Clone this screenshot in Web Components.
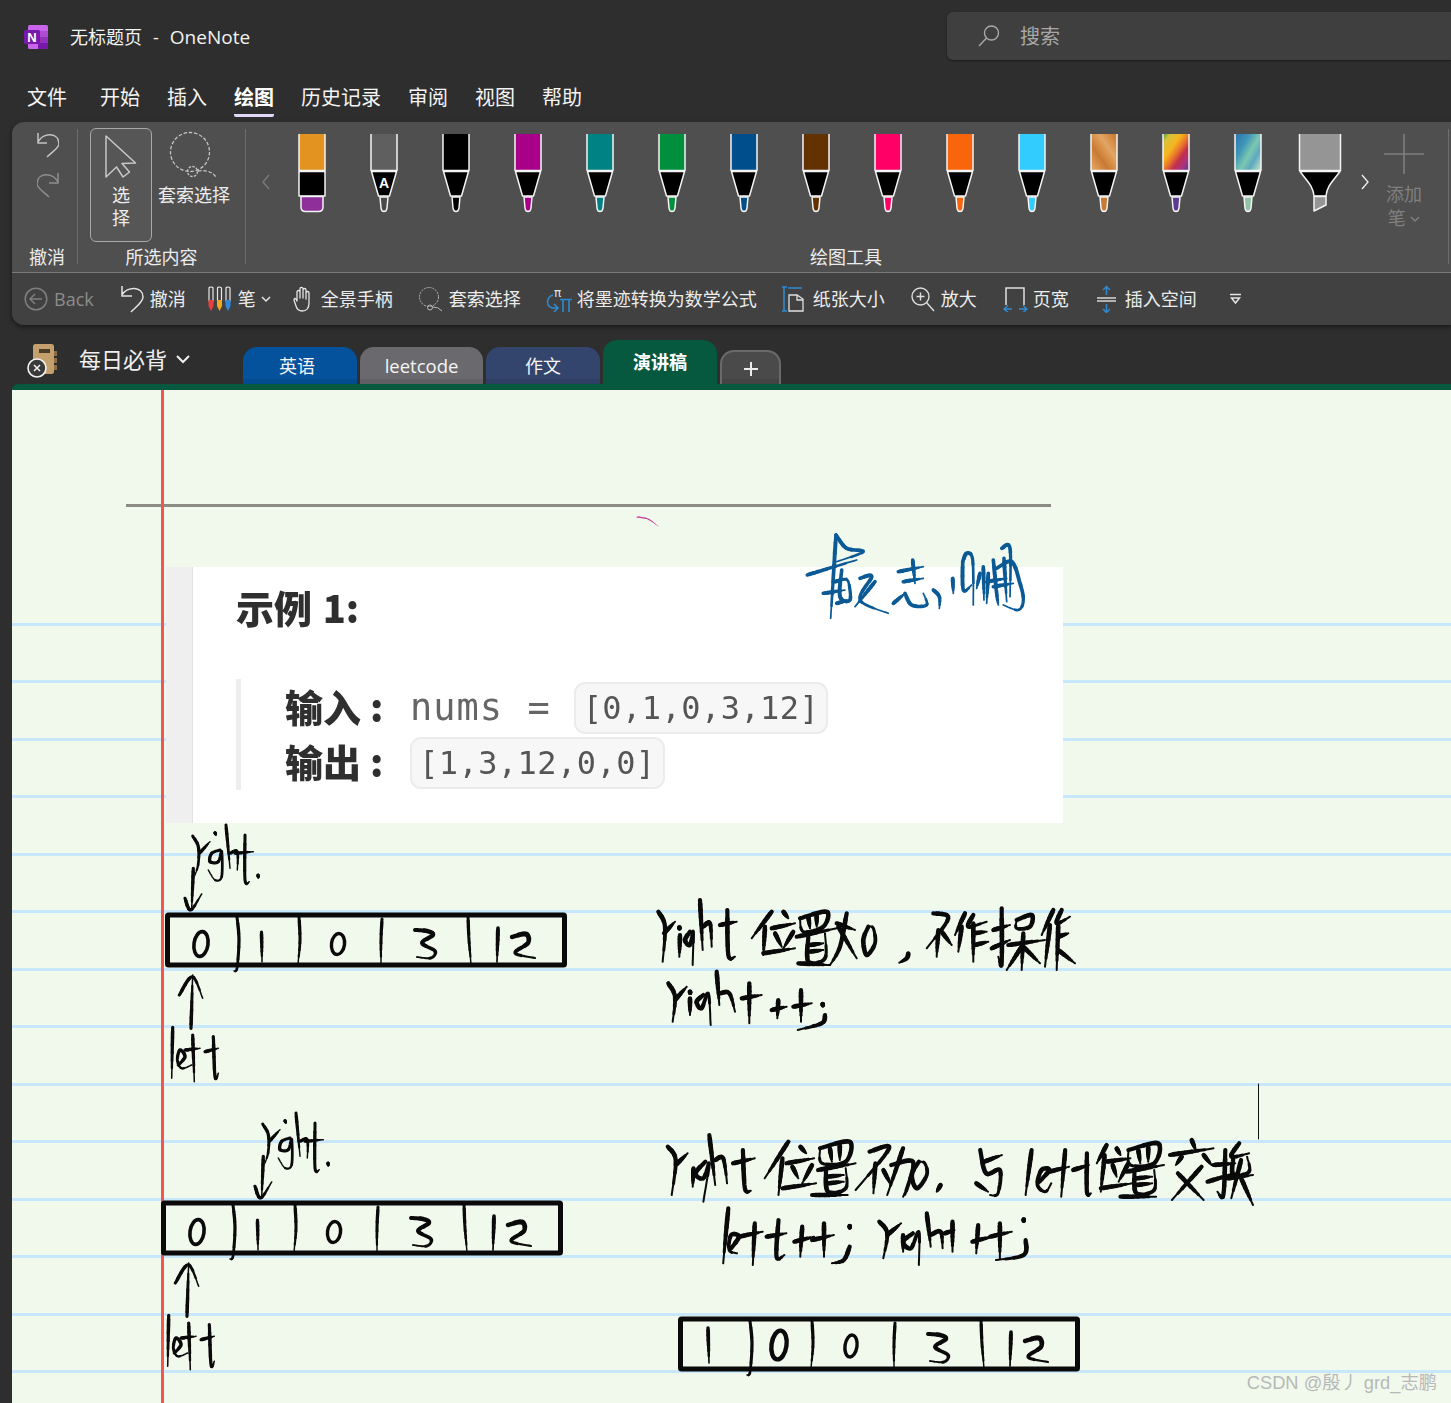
<!DOCTYPE html>
<html lang="zh">
<head>
<meta charset="utf-8">
<title>无标题页 - OneNote</title>
<style>
    html, body { margin: 0; height: 100%; overflow: hidden; background: #2e2e2e; }
    body { font-family: "Open Sans", "Noto Sans CJK SC", sans-serif; color: #f2f2f2; }
    onenote-app { width: 1451px; height: 1403px; }
</style>
</head>
<body>
<onenote-app></onenote-app>
<script>
const FONT = `"Open Sans", "Noto Sans CJK SC", sans-serif`;

class TitleBar extends HTMLElement {
    constructor() {
        super();
        this.attachShadow({ mode: 'open' });
        this.shadowRoot.innerHTML = `
            <style>
                :host { display: flex; height: 73px; justify-content: space-between; overflow: hidden; font: 18px/24px ${FONT}; color: #f2f2f2; }
                .left { display: flex; align-items: center; padding: 1px 0 0 24px; }
                svg.logo { width: 24px; height: 24px; margin-right: 22px; }
                .app { font-size: 19px; margin-left: 11px; }
                .dash { margin-left: 11px; }
                .search { flex: 0 0 504px; height: 48px; margin-top: 12px; display: flex; align-items: center; background: #3f3f3f; border-radius: 6px 0 0 6px; box-shadow: 0 1px 2px rgba(0,0,0,.45); font-size: 20px; color: #a8a8a8; }
                .search span { padding: 1px 0 0 1px; }
                .search svg { width: 24px; height: 24px; margin: 0 18px 0 30px; }
            </style>
            <div class="left">
                <svg class="logo" viewBox="0 0 24 24">
                    <rect x="4" width="20" height="24" rx="1.5" fill="#ca64ea"/>
                    <rect x="14" y="6" width="10" height="6" fill="#ae4bd5"/>
                    <rect x="14" y="12" width="10" height="6" fill="#9332bf"/>
                    <rect x="14" y="18" width="10" height="6" fill="#7719aa"/>
                    <rect y="5" width="16" height="14" rx="1.5" fill="#7719aa"/>
                    <text x="8" y="16.5" text-anchor="middle" font-family="Liberation Sans" font-weight="700" font-size="13" fill="#fff">N</text>
                </svg>
                <span>无标题页</span><span class="dash">-</span><span class="app">OneNote</span>
            </div>
            <div class="search">
                <svg viewBox="0 0 24 24" fill="none" stroke="#a8a8a8" stroke-width="1.4"><circle cx="14.5" cy="9" r="7"/><path d="M9.5 14 2 22"/></svg>
                <span>搜索</span>
            </div>`;
    }
}

class MenuBar extends HTMLElement {
    constructor() {
        super();
        this.attachShadow({ mode: 'open' });
        this.shadowRoot.innerHTML = `
            <style>
                :host { display: flex; height: 49px; padding-left: 27px; gap: 27px; font: 20px/28px ${FONT}; color: #f4f4f4; }
                ::slotted(a) { display: block; height: 28px; padding: 11px 0 2px; border-bottom: 3px solid transparent; }
                ::slotted(a:first-child) { margin-right: 6px; }
                ::slotted(a.on) { font-weight: 700; color: #fff; border-bottom-color: #e4d8f8; border-radius: 0 0 2px 2px; }
            </style>
            <slot></slot>`;
    }
}

class OneRibbon extends HTMLElement {
    constructor() {
        super();
        this.attachShadow({ mode: 'open' });
        this.shadowRoot.innerHTML = `
            <style>
                :host { display: block; margin-left: 12px; height: 203px; border-radius: 12px 0 0 12px; overflow: hidden; box-shadow: 0 2px 5px rgba(0,0,0,.5); font: 18px/24px ${FONT}; color: #ececec; }
                .top { display: flex; height: 151px; box-sizing: border-box; background: #4f4f4f; border-bottom: 1px solid #7a7a7a; }
                .bottom { display: flex; height: 52px; align-items: center; background: #414141; }
            </style>
            <div class="top"><slot name="top"></slot></div>
            <div class="bottom"><slot name="bottom"></slot></div>`;
    }
}

class RibbonGroup extends HTMLElement {
    constructor() {
        super();
        this.attachShadow({ mode: 'open' });
        this.shadowRoot.innerHTML = `
            <style>
                :host { display: flex; flex-direction: column; box-sizing: border-box; height: 135px; margin-top: 7px; border-right: 1px solid #6e6e6e; }
                .content { flex: 1; display: flex; min-height: 0; }
                .label { height: 24px; margin-bottom: -5px; padding: 0 var(--rp, 0) 0 var(--lp, 0); text-align: center; color: #ececec; }
            </style>
            <div class="content"><slot></slot></div>
            <div class="label"></div>`;
    }
    connectedCallback() {
        this.shadowRoot.querySelector('.label').textContent = this.getAttribute('label');
    }
}

class RibbonButton extends HTMLElement {
    constructor() {
        super();
        this.attachShadow({ mode: 'open' });
        this.shadowRoot.innerHTML = `
            <style>
                :host { display: flex; flex-direction: column; align-items: center; box-sizing: border-box; font: 18px/23px ${FONT}; color: #ececec; text-align: center; }
                :host([active]) { background: #565656; border: 1px solid #a8a8a8; border-radius: 6px; }
            </style>
            <slot></slot>`;
    }
}

const PEN_FILLS = {
    wood: `<linearGradient id="f" x1="0" y1=".3" x2=".3" y2="0" spreadMethod="reflect"><stop offset="0" stop-color="#c87a34"/><stop offset=".5" stop-color="#d88f48"/><stop offset="1" stop-color="#e2a566"/></linearGradient>`,
    rainbow: `<linearGradient id="f" x1="0" y1="0" x2="1" y2="1"><stop offset="0" stop-color="#3fa04a"/><stop offset=".14" stop-color="#d8c23a"/><stop offset=".36" stop-color="#f6b51e"/><stop offset=".52" stop-color="#e8742a"/><stop offset=".66" stop-color="#c42f4d"/><stop offset=".82" stop-color="#a8337f"/><stop offset="1" stop-color="#5a3a98"/></linearGradient>`,
    galaxy: `<linearGradient id="f" x1="0" y1=".1" x2="1" y2=".9"><stop offset="0" stop-color="#2f78b0"/><stop offset=".3" stop-color="#3f97b8"/><stop offset=".55" stop-color="#7cc7b0"/><stop offset=".75" stop-color="#5ea8c0"/><stop offset="1" stop-color="#b8e0c4"/></linearGradient>`
};

class PenTool extends HTMLElement {
    connectedCallback() {
        const kind = this.getAttribute('kind') || 'pen';
        const color = this.getAttribute('color') || '#000';
        const nib = this.getAttribute('nib') || color;
        const fill = PEN_FILLS[color] ? 'url(#f)' : color;
        const defs = PEN_FILLS[color] ? `<defs>${PEN_FILLS[color]}</defs>` : '';
        let body = `
            <path d="M23 0V36.5H49V0" fill="${fill}"/>
            <path d="M23.5 37.5 30.5 62H41.5L48.5 37.5Z" fill="#000"/>
            <path d="M32 63 33 74Q33.4 77.5 36 77.5 38.6 77.5 39 74L40 63Z" fill="${nib}"/>`;
        if (kind === 'eraser') {
            body = `
                <path d="M23 0V36.5H49V0" fill="${fill}"/>
                <rect x="23" y="37.5" width="26" height="24.5" fill="#000"/>
                <path d="M25 62.5V73Q25 77.5 29.5 77.5H42.5Q47 77.5 47 73V62.5Z" fill="${nib}"/>`;
        }
        if (kind === 'marker') {
            body = `
                <path d="M15.5 0V36.5H56.5V0" fill="${fill}"/>
                <path d="M16 37.5C24 48 29 52 30 62H42C43 52 48 48 56 37.5Z" fill="#000"/>
                <path d="M30 62.5V77L42 71V62.5Z" fill="${fill}"/>`;
        }
        const letter = this.hasAttribute('letter')
            ? `<text x="36" y="54" text-anchor="middle" font-family="Liberation Sans" font-weight="700" font-size="14" fill="#fff" stroke="none">${this.getAttribute('letter')}</text>`
            : '';
        this.attachShadow({ mode: 'open' });
        this.shadowRoot.innerHTML = `
            <style>
                :host { display: block; flex: 0 0 72px; height: 80px; margin-top: 5px; }
                svg { display: block; }
            </style>
            <svg width="72" height="80" viewBox="0 0 72 80" stroke="#f4f4f4" stroke-width="1.5" stroke-linejoin="round">${defs}${body}${letter}</svg>`;
    }
}

class ToolItem extends HTMLElement {
    constructor() {
        super();
        this.attachShadow({ mode: 'open' });
        this.shadowRoot.innerHTML = `
            <style>
                :host { display: flex; align-items: center; flex: none; gap: var(--gap, 7px); height: 30px; font: 18px/24px ${FONT}; color: #ececec; }
                :host([dim]) { color: #8c8c8c; }
                ::slotted(svg) { display: block; flex: none; }
            </style>
            <slot></slot>`;
    }
}

class SectionTab extends HTMLElement {
    constructor() {
        super();
        this.attachShadow({ mode: 'open' });
        this.shadowRoot.innerHTML = `
            <style>
                :host { display: flex; align-items: center; justify-content: center; flex: none; height: 37px; box-sizing: border-box; padding-top: 1px; border-radius: 14px 14px 0 0; font: 18px/24px ${FONT}; color: #f4f4f4; background: var(--c); box-shadow: inset 0 -5px 0 rgba(0,0,0,.08); }
                :host([active]) { height: 44px; padding: 0 0 0; font-weight: 700; color: #fff; box-shadow: none; }
                :host([add]) { height: 34px; border: 2px solid #6a6a6a; border-bottom: 0; margin-left: 0; }
            </style>
            <slot></slot>`;
    }
}

class NotebookPicker extends HTMLElement {
    constructor() {
        super();
        this.attachShadow({ mode: 'open' });
        this.shadowRoot.innerHTML = `
            <style>
                :host { display: flex; align-items: center; flex: none; box-sizing: border-box; width: 231px; height: 44px; padding: 0 0 6px 27px; font: 22px/30px ${FONT}; color: #f0f0f0; }
                svg.book { width: 32px; height: 36px; margin: 2px 20px 0 0; }
                svg.chev { width: 16px; height: 10px; margin-left: 8px; }
            </style>
            <svg class="book" viewBox="0 0 32 36">
                <rect x="6" y="2" width="21" height="30" rx="2.5" fill="#c4a06e"/>
                <rect x="12" y="7" width="11" height="4" fill="#4a3d2a"/>
                <path d="M27 9h3v5h-3zM27 16h3v5h-3zM27 23h3v5h-3z" fill="#8e6f45"/>
                <circle cx="10" cy="26" r="9" fill="#3a3a3a" stroke="#f4f4f4" stroke-width="1.6"/>
                <path d="M7 23l6 6M13 23l-6 6" stroke="#f4f4f4" stroke-width="1.5"/>
            </svg>
            <span>每日必背</span>
            <svg class="chev" viewBox="0 0 16 10" fill="none" stroke="#f0f0f0" stroke-width="2"><path d="M2 2l6 6 6-6"/></svg>`;
    }
}

class SectionBar extends HTMLElement {
    constructor() {
        super();
        this.attachShadow({ mode: 'open' });
        this.shadowRoot.innerHTML = `
            <style>
                :host { display: flex; align-items: flex-end; height: 44px; margin-top: 15px; }
                .tabs { display: flex; align-items: flex-end; gap: 3px; margin-left: 12px; }
            </style>
            <slot name="book"></slot>
            <div class="tabs"><slot></slot></div>`;
    }
}

class CodeChip extends HTMLElement {
    constructor() {
        super();
        this.attachShadow({ mode: 'open' });
        this.shadowRoot.innerHTML = `
            <style>
                :host { display: inline-flex; align-items: center; box-sizing: border-box; height: 52px; padding: 0 7px; background: #f7f7f7; border: 2px solid #ececec; border-radius: 11px; font: 32px/40px "DejaVu Sans Mono", monospace; letter-spacing: .45px; color: #555; }
            </style>
            <slot></slot>`;
    }
}

class PastedImage extends HTMLElement {
    constructor() {
        super();
        this.attachShadow({ mode: 'open' });
        this.shadowRoot.innerHTML = `
            <style>
                :host { position: absolute; left: 154px; top: 177px; width: 897px; height: 256px; display: flex; background: #fff; font-family: "Noto Sans CJK SC", sans-serif; color: #2f2f2f; }
                .stripe { flex: 0 0 26px; background: #efefef; border-right: 1px solid #e2e2e2; }
                .body { padding: 15px 0 0 43px; filter: blur(.35px); }
                h2 { margin: 0 0 47px; font-size: 38px; line-height: 50px; font-weight: 900; word-spacing: 2px; }
                .quote { display: flex; flex-direction: column; gap: 3px; height: 111px; box-sizing: border-box; padding: 3px 0 0 44px; border-left: 5px solid #eeeeee; }
                .row { display: flex; align-items: center; height: 52px; }
                b { flex: 0 0 125px; padding-bottom: 5px; font-size: 38px; line-height: 47px; font-weight: 900; }
                b i { font-style: normal; margin-left: 9px; }
                .nums { font: 37px/40px "DejaVu Sans Mono", monospace; color: #666; letter-spacing: 1px; word-spacing: 1px; margin-right: 23px; }
            </style>
            <div class="stripe"></div>
            <div class="body">
                <h2>示例 1:</h2>
                <div class="quote">
                    <div class="row"><b>输入<i>:</i></b><span class="nums">nums =</span><code-chip>[0,1,0,3,12]</code-chip></div>
                    <div class="row"><b>输出<i>:</i></b><code-chip>[1,3,12,0,0]</code-chip></div>
                </div>
            </div>`;
    }
}

// freehand ink: every stroke is a list of x,y points read from the reference,
// drawn in short stretches so that the line thins towards its end like a brush pen
function sample(p) {
    const pts = [];
    for (let i = 0; i < p.length; i += 2) pts.push([p[i], p[i + 1]]);
    const at = i => pts[Math.max(0, Math.min(pts.length - 1, i))];
    const out = [];
    for (let i = 0; i < pts.length - 1; i++) {
        const [a, b, c, e] = [at(i - 1), at(i), at(i + 1), at(i + 2)];
        for (let k = 0; k < 8; k++) {
            const t = k / 8, t2 = t * t, t3 = t2 * t;
            out.push([0, 1].map(j => 0.5 * (2 * b[j] + (c[j] - a[j]) * t + (2 * a[j] - 5 * b[j] + 4 * c[j] - e[j]) * t2 + (3 * b[j] - a[j] - 3 * c[j] + e[j]) * t3)));
        }
    }
    out.push(pts[pts.length - 1]);
    return out;
}
function ink(strokes, m, w, color = '#0a0a0a') {
    let html = '';
    for (const s of strokes) {
        const pts = sample(s.map((v, i) => i % 2 ? m.oy + v / m.sy : m.ox + v / m.sx));
        const parts = 7;
        for (let n = 0; n < parts; n++) {
            const from = Math.floor(n * (pts.length - 1) / parts);
            const to = Math.floor((n + 1) * (pts.length - 1) / parts);
            const t = (n + .5) / parts;
            const width = w * Math.min(1, .75 + t * 2) * (1.12 - .8 * t * t * t);
            const d = pts.slice(from, to + 1).map((q, i) => `${i ? 'L' : 'M'}${q[0].toFixed(1)} ${q[1].toFixed(1)}`).join('');
            html += `<path d="${d}" stroke="${color}" stroke-width="${width.toFixed(2)}"/>`;
        }
    }
    return html;
}
function oval(cx, cy, rx, ry, w) {
    return `<ellipse cx="${cx}" cy="${cy}" rx="${rx}" ry="${ry}" fill="none" stroke="#0a0a0a" stroke-width="${w}" transform="rotate(8 ${cx} ${cy})"/>`;
}
const PAGE = { ox: 0, oy: 0, sx: 1, sy: 1 };
const Z7 = { ox: 150, oy: 820, sx: 3, sy: 3 };
const Z8 = { ox: 640, oy: 890, sx: 3, sy: 3 };
const Z10 = { ox: 650, oy: 1120, sx: 2.529, sy: 3 };
const Z11 = { ox: 780, oy: 510, sx: 3, sy: 3 };

const ZHI = [[430,85,505,65,495,125,435,130,430,85],[455,85,460,125],[480,75,480,120],[425,150,520,130],[445,150,450,215,495,205,495,145],[450,170,490,165],[450,190,490,185],[410,225,500,225]];
const moved = (list, dx, dy) => list.map(s => s.map((v, i) => v + (i % 2 ? dy : dx)));

const FRAME = `
    <rect x="167.5" y="915" width="397" height="50" rx="1" fill="none" stroke="#0a0a0a" stroke-width="5"/>
    ${ink([[237,917,239,940,237,968,234,971],[299,917,300,940,298,964],[382,919,381,940,381,964],[468,917,469,940,471,964]], PAGE, 3)}
    ${ink([[415,930,427,931,433,935,422,943,435,951,431,958,417,957]], PAGE, 4)}
    ${ink([[498,928,497,962]], PAGE, 3.6)}
    ${ink([[512,937,526,934,528,943,515,953,535,958]], PAGE, 4.4)}`;
const FIRST = `${oval(201, 944, 7, 12.5, 3.6)}${ink([[261.5,932,262,962]], PAGE, 3.2)}${oval(338, 944, 6.5, 10.5, 3.4)}`;
const RIGHT = ink([[128,48,145,80,145,130,135,165],[148,100,180,65],[195,38,198,45],[210,90,185,100,180,125,205,125,215,95,215,170,195,180,175,150],[228,15,240,145],[240,100,262,95,262,150],[285,45,285,180,298,185],[255,100,310,95],[324,165,325,174]], Z7, 3)
    + ink([[130,145,125,270],[105,235,122,270,155,222]], Z7, 3.2);
const LEFT = ink([[68,622,65,775],[85,735,105,710,90,690,82,720,95,745,125,735],[128,645,133,785],[105,690,150,685],[190,650,195,770,205,760],[165,695,205,685]], Z7, 3.2)
    + ink([[123,625,128,465],[88,525,127,470,158,535]], Z7, 3.2);

const NOTE1 = [
    [55,65,75,110,68,215],[72,130,105,95],[120,135,118,200],[118,112,119,118],[150,125,135,150,150,165,160,125,158,225],[180,30,188,180],[190,110,210,100,215,170],[262,60,265,195,285,200],[240,105,290,95],
    [395,65,335,145],[375,110,370,195],[430,65,445,85],[395,115,465,100],[405,130,425,170],[460,125,430,175],[370,190,465,175],
    [480,85,560,65,550,110,490,125,480,85],[505,80,510,115],[530,75,530,110],[470,140,590,115],[505,140,505,215,555,205,555,130],[510,165,550,160],[510,185,550,180],[475,220,570,225],
    [590,100,645,120],[620,70,600,170,570,225],[595,110,650,205],
    [685,110,670,150,680,195,705,160,700,115,685,110],
    [805,190,800,205,778,218],
    [880,70,925,85,860,175],[895,120,890,200],[905,125,935,165],
    [975,70,945,135],[965,110,955,185],[1000,75,985,110,1040,95],[1000,100,1000,215],[1000,130,1040,125],[1005,165,1045,155],
    [1060,120,1110,105],[1085,55,1085,220,1075,200],[1055,175,1110,150],[1130,90,1175,75,1170,110,1130,115,1130,90],[1105,165,1215,150],[1150,130,1145,240],[1145,170,1100,240],[1150,170,1200,220],
    [1240,60,1205,135],[1230,105,1215,230],[1265,60,1250,100,1290,80],[1255,100,1250,240],[1255,140,1285,130],[1255,180,1305,220],
    [85,280,105,320,98,395],[105,330,140,290],[150,325,150,375],[150,305,151,312],[190,315,170,335,185,355,205,310,212,405],[230,245,238,345],[240,310,268,310,285,365],[328,280,328,400],[305,325,365,315],[395,360,440,350],[415,330,412,385],[483,300,483,395],[460,350,515,340],[548,342,549,349],[555,375,545,400,473,420]
];
const NOTE2 = [
    [45,80,65,120,55,225],[65,135,95,100],[110,145,108,200],[140,125,115,160,135,175,150,130,135,245],[150,45,165,195],[165,120,185,115,195,190],[235,90,240,205,255,212],[210,130,265,115],
    [350,65,290,175],[335,115,325,225],[380,80,395,100],[345,130,415,115],[360,140,375,175],[410,135,385,190],[335,205,420,190],
    ...ZHI,
    [555,95,605,85,520,210],[570,130,565,220],[590,150,610,195],[610,135,665,125,650,205,640,230],[640,85,600,225],[680,125,662,165,675,205,700,165,695,130,680,125],
    [735,195,725,215],
    [835,90,850,160,885,150,880,220,860,225],[845,125,890,105],[825,190,855,215],
    [965,90,950,225],[985,185,1010,150,990,150,980,195,1000,215,1015,190],[1050,90,1040,230],[1010,155,1060,140],[1105,100,1105,215,1115,220],[1070,150,1110,135],
    [1155,75,1130,130],[1150,105,1140,215],[1180,85,1190,105],[1155,125,1215,115],[1170,135,1180,170],[1210,130,1185,185],[1140,205,1220,190],
    ...moved(ZHI, 780, 5),
    [1370,60,1380,90],[1315,105,1425,85],[1345,110,1330,135],[1400,105,1420,135],[1395,140,1320,240],[1335,160,1400,240],
    [1425,135,1480,130],[1455,90,1450,225,1435,215],[1410,185,1480,160],[1490,70,1470,110,1515,100],[1475,115,1475,165,1515,155,1510,110],[1460,175,1525,165],[1495,120,1470,235],[1495,175,1525,255],
    [198,265,185,430],[205,385,225,350,205,345,200,390,220,400],[265,310,260,435],[225,350,285,335],[325,300,320,410,340,405],[295,350,345,340],[365,365,415,350],[385,320,380,410],[440,310,440,410],[410,360,465,345],[505,318,505,326],[505,380,490,420,460,430],
    [580,305,600,340,590,415],[600,345,635,310],[640,345,640,395],[665,340,640,365,660,385,680,335,680,435],[700,280,710,380],[710,345,735,335,740,385],[765,305,765,395],[745,340,770,330],[815,365,865,350],[830,315,825,400],[885,310,885,415],[860,350,915,335],[945,298,945,306],[950,360,945,405,875,420]
];
const SIGN = [
    [168,75,160,200,152,325],[168,75,200,115,250,125,170,155],[82,195,130,180,230,150],[130,250,195,240],[185,180,180,260,210,270,205,215,190,210],[165,215,200,205],[170,280,205,270],[240,205,275,200,240,270,325,310],[285,215,225,290],
    [355,185,430,170],[398,150,405,220],[370,215,430,205],[340,280,375,250],[375,250,395,285,440,285,430,250],[460,240,478,260,478,295],
    [518,205,520,250],[548,155,560,130,578,150,580,285],[548,155,550,240,575,225],[600,190,590,235],[610,170,612,270],[625,190,620,280],[640,150,650,250,655,285],[665,115,690,115,690,260],[672,145,680,275],[650,175,695,155,720,220,730,270,715,300,670,285],[640,230,700,220],[620,215,680,205]
];

class InkLayer extends HTMLElement {
    constructor() {
        super();
        this.attachShadow({ mode: 'open' });
        this.shadowRoot.innerHTML = `
            <style>
                :host { position: absolute; inset: 0; pointer-events: none; }
                svg { display: block; }
                path { fill: none; stroke-linecap: round; stroke-linejoin: round; }
            </style>
            <svg width="1439" height="1013" viewBox="12 390 1439 1013">
                ${ink([[637,517,648,519,658,526]], PAGE, 1.2, '#c93e9e')}
                ${ink(SIGN, Z11, 3.6, '#0b5a96')}
                ${FRAME}${FIRST}${RIGHT}${LEFT}
                <g transform="translate(-4 288)">${FRAME}${FIRST}${LEFT}</g>
                <g transform="translate(70 288)">${RIGHT}</g>
                <g transform="translate(513 404)">${FRAME}</g>
                ${ink([[708,1328,709,1363]], PAGE, 3.4)}
                ${oval(779, 1345, 7.5, 14.5, 4.4)}
                ${oval(851, 1346, 6, 11, 3.4)}
                ${ink(NOTE1, Z8, 4.2)}
                ${ink(NOTE2, Z10, 4.2)}
                <path d="M1258.5 1084V1139" stroke="#111" stroke-width="1"/>
            </svg>`;
    }
}

class NoteCanvas extends HTMLElement {
    constructor() {
        super();
        this.attachShadow({ mode: 'open' });
        this.shadowRoot.innerHTML = `
            <style>
                :host { display: block; position: relative; height: 1013px; margin-left: 12px; overflow: hidden; background: #f1f8ec; border-top: 6px solid #06583f; border-radius: 6px 0 0 0; }
                .rules { position: absolute; left: 0; right: 0; top: 177.5px; bottom: 0; background: repeating-linear-gradient(to bottom, transparent 0, transparent 54.5px, #c7e8fc 54.5px, #c7e8fc 57.5px); }
                .margin { position: absolute; left: 149px; top: 0; bottom: 0; width: 3px; background: #f4554f; }
                .title-line { position: absolute; left: 114px; top: 114px; width: 925px; height: 3px; background: #8c8c84; }
                .mark { position: absolute; right: 14px; bottom: 6px; font: 18.3px/28px "Liberation Sans", "Noto Sans CJK SC", sans-serif; color: #b8b8b8; }
            </style>
            <div class="rules"></div>
            <div class="title-line"></div>
            <div class="margin"></div>
            <pasted-image></pasted-image>
            <ink-layer></ink-layer>
            <div class="mark">CSDN @殷丿 grd_志鹏</div>`;
    }
}

const ICON = {
    undo: (c = '#e4e4e4') => `<svg width="24" height="30" viewBox="0 0 24 30" fill="none" stroke="${c}" stroke-width="1.5"><path d="M2 2V12H12M2 11C7 2 23 2 23 13 23 18 17 22 11 28"/></svg>`,
    back: `<svg width="24" height="24" viewBox="0 0 24 24" fill="none" stroke="#7e7e7e" stroke-width="1.5"><circle cx="12" cy="12" r="10.8"/><path d="M18 12H6M11 7l-5 5 5 5"/></svg>`,
    pens: `<svg width="26" height="26" viewBox="0 0 26 26" stroke="#e8e8e8" stroke-width="1.2" stroke-linejoin="round"><path d="M2 2Q2 1 4 1 6 1 6 2V15H2Z" fill="none"/><path d="M1.500 14H6.500V20L4 25 1.500 20Z" fill="#e8403f" stroke="none"/><path d="M10.500 2Q10.500 1 12.500 1 14.500 1 14.500 2V15H10.500Z" fill="none"/><path d="M10 14H15V20L12.500 25 10 20Z" fill="#f0a81e" stroke="none"/><path d="M19 2Q19 1 21 1 23 1 23 2V15H19Z" fill="none"/><path d="M18.500 14H23.500V20L21 25 18.500 20Z" fill="#2f8ade" stroke="none"/></svg>`,
    hand: `<svg width="20" height="26" viewBox="0 0 20 26" fill="none" stroke="#e4e4e4" stroke-width="1.3" stroke-linejoin="round"><path d="M4 14V6Q4 4.500 5.500 4.500 7 4.500 7 6V12 3Q7 1.300 8.500 1.300 10 1.300 10 3V12 4Q10 2.500 11.500 2.500 13 2.500 13 4V13 7Q13 5.500 14.500 5.500 16 5.500 16 7V17Q16 25 9 25 4.500 25 3 20L1 14Q1 12.500 2.200 12.500 3.500 12.800 4 15Z"/></svg>`,
    lasso: `<svg width="25" height="26" viewBox="0 0 25 26" fill="none" stroke="#b8b8b8" stroke-width="1"><circle cx="11" cy="11" r="9.500" stroke-dasharray="2 1"/><circle cx="12" cy="21.500" r="2.500"/><path d="M14.500 21Q20 20.500 24 25"/></svg>`,
    math: `<svg width="26" height="30" viewBox="0 0 26 30" fill="none" stroke="#2f8ad0" stroke-width="1.6"><text x="8" y="13" font-family="DejaVu Sans" font-size="12" fill="#e4e4e4" stroke="none">π</text><path d="M7 11C1 13 -1 21 6 24H12M8 20l4 4-4 4"/><path d="M14 15.500H26M17 16V28M23 16V28"/></svg>`,
    paper: `<svg width="22" height="26" viewBox="0 0 22 26" fill="none"><path d="M1 1V25M-1 1H4M-1 25H4M5 2H19" stroke="#2f8ad0" stroke-width="1.6" transform="translate(1 0)"/><path d="M7 9H15L21 13V25H7ZM15 9V14H21" stroke="#e0e0e0" stroke-width="1.3"/></svg>`,
    zoom: `<svg width="24" height="26" viewBox="0 0 24 26" fill="none" stroke="#dcdcdc" stroke-width="1.4"><circle cx="9.500" cy="10.500" r="8.500"/><path d="M15.500 16.500 23 25M9.500 6.500V14.500M5.500 10.500H13.500"/></svg>`,
    width: `<svg width="25" height="26" viewBox="0 0 25 26" fill="none" stroke-width="1.500"><path d="M3 19V2H21V19" stroke="#e0e0e0"/><path d="M1 23H9M5 19.500 1 23 5 26.500M24 23H16M20 19.500 24 23 20 26.500" stroke="#2f8ad0"/></svg>`,
    space: `<svg width="21" height="28" viewBox="0 0 21 28" fill="none" stroke-width="1.500"><path d="M1 13H20M1 16H20" stroke="#d8d8d8"/><path d="M10.500 10V2M7 5l3.500-3.500L14 5M10.500 19V27M7 24l3.500 3.500L14 24" stroke="#2f8ad0"/></svg>`,
    more: `<svg width="13" height="12" viewBox="0 0 13 12" fill="none" stroke="#e4e4e4" stroke-width="1.500"><path d="M1 1.500H12M2.500 5H10.500L6.500 10Z"/></svg>`,
    chev: `<svg width="10" height="7" viewBox="0 0 10 7" fill="none" stroke="#e4e4e4" stroke-width="1.500"><path d="M1 1l4 4 4-4"/></svg>`
};

class OneNoteApp extends HTMLElement {
    constructor() {
        super();
        this.attachShadow({ mode: 'open' });
        this.shadowRoot.innerHTML = `
            <style>
                :host { display: block; font-family: ${FONT}; color: #f2f2f2; }
                .undo { flex-direction: column; display: flex; gap: 14px; padding: 3px 0 0 25px; }
                .g2 { display: flex; width: 100%; }
                .select { width: 62px; height: 114px; margin: -1px 6px 0 12px; padding-top: 6px; }
                .select svg { margin-bottom: 5px; }
                .lasso { width: 72px; padding-top: 0; }
                .lasso svg { margin-bottom: 3px; }
                .chev-l { flex: 0 0 30px; box-sizing: border-box; padding: 42px 0 0 15px; height: 58px; }
                .chev-r { flex: 0 0 28px; box-sizing: border-box; padding: 42px 0 0 4px; height: 58px; }
                .add { flex: 0 0 42px; margin-left: -1px; color: #808080; text-align: center; font-size: 18px; line-height: 24px; padding-top: 4px; white-space: nowrap; }
                .add .plus { display: block; margin: 0 auto 7px; }
                .pens { display: flex; }
            </style>
            <title-bar></title-bar>
            <menu-bar>
                <a>文件</a><a>开始</a><a>插入</a><a class="on">绘图</a><a>历史记录</a><a>审阅</a><a>视图</a><a>帮助</a>
            </menu-bar>
            <one-ribbon>
                <ribbon-group slot="top" label="撤消" style="flex:0 0 66px;--lp:5px">
                    <div class="undo">
                        <svg width="22" height="26" viewBox="0 0 22 26" fill="none" stroke="#c4c4c4" stroke-width="1.500"><path d="M1 1V11H10M1 10C6 0 22 0 22 12 22 16 16 19 10 25"/></svg>
                        <svg width="22" height="26" viewBox="0 0 22 26" fill="none" stroke="#8e8e8e" stroke-width="1.500"><path d="M21 1V11H12M21 10C16 0 0 0 0 12 0 16 6 19 12 25"/></svg>
                    </div>
                </ribbon-group>
                <ribbon-group slot="top" label="所选内容" style="flex:0 0 168px">
                    <div class="g2">
                        <ribbon-button class="select" active>
                            <svg width="34" height="44" viewBox="0 0 34 44" fill="none" stroke="#c8c8c8" stroke-width="1.500" stroke-linejoin="round"><path d="M2 1 31.500 28 18 28.500 25.500 37 19 42 12.500 32 2 42Z"/></svg>
                            <span>选<br>择</span>
                        </ribbon-button>
                        <ribbon-button class="lasso">
                            <svg width="64" height="52" viewBox="0 0 64 52" fill="none" stroke="#c4c4c4" stroke-width="1.300"><circle cx="28" cy="23" r="19.500" stroke-dasharray="3.500 1.800"/><circle cx="30.500" cy="42.500" r="5" stroke-dasharray="2.500 1.300"/><path d="M36 42Q48 40 54 48" stroke-dasharray="3.500 1.800"/></svg>
                            <span>套索选择</span>
                        </ribbon-button>
                    </div>
                </ribbon-group>
                <ribbon-group slot="top" label="绘图工具" style="flex:0 0 1203px;--rp:2px">
                    <div class="pens">
                        <div class="chev-l"><svg width="10" height="16" viewBox="0 0 10 16" fill="none" stroke="#7c7c7c" stroke-width="1.300"><path d="M8 1 2 8l6 7"/></svg></div>
                        <pen-tool kind="eraser" color="#e3931f" nib="#8e2f9a"></pen-tool>
                        <pen-tool color="#5f5f5f" nib="#4a4a4a" letter="A"></pen-tool>
                        <pen-tool color="#000"></pen-tool>
                        <pen-tool color="#a9008a"></pen-tool>
                        <pen-tool color="#008284"></pen-tool>
                        <pen-tool color="#008f3c"></pen-tool>
                        <pen-tool color="#004f8c"></pen-tool>
                        <pen-tool color="#643200"></pen-tool>
                        <pen-tool color="#ff0066"></pen-tool>
                        <pen-tool color="#f9650c"></pen-tool>
                        <pen-tool color="#33ccff"></pen-tool>
                        <pen-tool color="wood" nib="#c97a35"></pen-tool>
                        <pen-tool color="rainbow" nib="#5b3a93"></pen-tool>
                        <pen-tool color="galaxy" nib="#8fc4a4"></pen-tool>
                        <pen-tool kind="marker" color="#959595"></pen-tool>
                        <div class="chev-r"><svg width="10" height="16" viewBox="0 0 10 16" fill="none" stroke="#f0f0f0" stroke-width="1.300"><path d="M2 1l6 7-6 7"/></svg></div>
                        <div class="add">
                            <svg class="plus" width="42" height="42" viewBox="0 0 42 42" stroke="#808080" stroke-width="1.500"><path d="M21 1V41M1 21H41"/></svg>
                            添加<br>笔 <svg style="margin:0 0 2px" width="10" height="7" viewBox="0 0 10 7" fill="none" stroke="#808080" stroke-width="1.500"><path d="M1 1l4 4 4-4"/></svg>
                        </div>
                    </div>
                </ribbon-group>

                <tool-item slot="bottom" dim style="margin-left:12px;--gap:6px">${ICON.back}<span>Back</span></tool-item>
                <tool-item slot="bottom" style="margin-left:26px;--gap:6px">${ICON.undo()}<span>撤消</span></tool-item>
                <tool-item slot="bottom" style="margin-left:21px;--gap:5px">${ICON.pens}<span>笔</span>${ICON.chev}</tool-item>
                <tool-item slot="bottom" style="margin-left:22px;--gap:8px">${ICON.hand}<span>全景手柄</span></tool-item>
                <tool-item slot="bottom" style="margin-left:25px;--gap:6px">${ICON.lasso}<span>套索选择</span></tool-item>
                <tool-item slot="bottom" style="margin-left:25px;--gap:5px">${ICON.math}<span>将墨迹转换为数学公式</span></tool-item>
                <tool-item slot="bottom" style="margin-left:25px;--gap:9px">${ICON.paper}<span>纸张大小</span></tool-item>
                <tool-item slot="bottom" style="margin-left:26px;--gap:6px">${ICON.zoom}<span>放大</span></tool-item>
                <tool-item slot="bottom" style="margin-left:26px;--gap:5px">${ICON.width}<span>页宽</span></tool-item>
                <tool-item slot="bottom" style="margin-left:27px;--gap:8px">${ICON.space}<span>插入空间</span></tool-item>
                <tool-item slot="bottom" style="margin-left:32px">${ICON.more}</tool-item>
            </one-ribbon>
            <section-bar>
                <notebook-picker slot="book"></notebook-picker>
                <section-tab style="--c:#04529c;width:114px;padding-right:6px">英语</section-tab>
                <section-tab style="--c:#6a6a6e;width:123px;font-size:18.5px">leetcode</section-tab>
                <section-tab style="--c:#34456d;width:114px">作文</section-tab>
                <section-tab active style="--c:#06583f;width:114px">演讲稿</section-tab>
                <section-tab add style="--c:#4a4a4a;width:61px">
                    <svg width="14" height="14" viewBox="0 0 14 14" stroke="#ececec" stroke-width="2"><path d="M7 0V14M0 7H14"/></svg>
                </section-tab>
            </section-bar>
            <note-canvas></note-canvas>`;
    }
}

customElements.define('code-chip', CodeChip);
customElements.define('pasted-image', PastedImage);
customElements.define('ink-layer', InkLayer);
customElements.define('note-canvas', NoteCanvas);
customElements.define('title-bar', TitleBar);
customElements.define('menu-bar', MenuBar);
customElements.define('one-ribbon', OneRibbon);
customElements.define('ribbon-group', RibbonGroup);
customElements.define('ribbon-button', RibbonButton);
customElements.define('pen-tool', PenTool);
customElements.define('tool-item', ToolItem);
customElements.define('section-tab', SectionTab);
customElements.define('notebook-picker', NotebookPicker);
customElements.define('section-bar', SectionBar);
customElements.define('onenote-app', OneNoteApp);
</script>
</body>
</html>
